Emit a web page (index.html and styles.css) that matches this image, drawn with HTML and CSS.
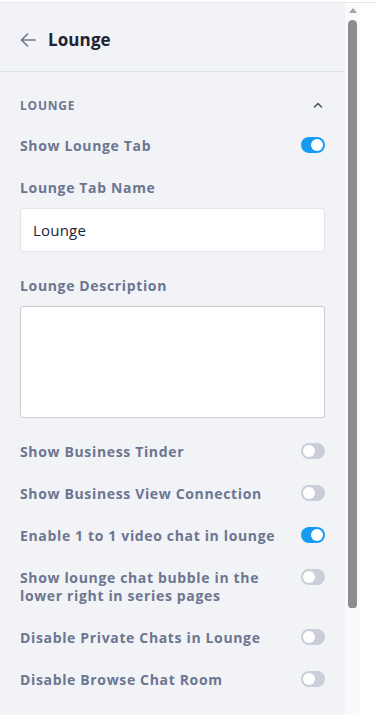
FILE: index.html
```html
<!DOCTYPE html>
<html>
<head>
    <meta charset="UTF-8">
    <link rel="stylesheet" href="styles.css">
</head>
<body>
    <div class="frame">
        <div class="panel">
            <div class="header">
                <button class="back-btn" title="Back">
                    <svg viewBox="0 0 16 14">
                        <path d="M15 7H1.5M7.5 1L1.5 7l6 6"/>
                    </svg>
                </button>
                <h3>Lounge</h3>
            </div>
            <div class="content">
                <div class="section-head">
                    <span>LOUNGE</span>
                    <svg class="chevron" viewBox="0 0 10 6">
                        <path d="M1.5 5L5 1.5 8.5 5"/>
                    </svg>
                </div>

                <div class="toggle-row first">
                    <span class="label">Show Lounge Tab</span>
                    <span class="toggle on"></span>
                </div>

                <div class="field">
                    <label class="label">Lounge Tab Name</label>
                    <div class="text-input">Lounge</div>
                </div>

                <div class="field">
                    <label class="label">Lounge Description</label>
                    <div class="text-area"></div>
                </div>

                <div class="toggle-list">
                    <div class="toggle-row">
                        <span class="label">Show Business Tinder</span>
                        <span class="toggle"></span>
                    </div>
                    <div class="toggle-row">
                        <span class="label">Show Business View Connection</span>
                        <span class="toggle"></span>
                    </div>
                    <div class="toggle-row">
                        <span class="label">Enable 1 to 1 video chat in lounge</span>
                        <span class="toggle on"></span>
                    </div>
                    <div class="toggle-row">
                        <span class="label">Show lounge chat bubble in the lower right in series pages</span>
                        <span class="toggle"></span>
                    </div>
                    <div class="toggle-row">
                        <span class="label">Disable Private Chats in Lounge</span>
                        <span class="toggle"></span>
                    </div>
                    <div class="toggle-row">
                        <span class="label">Disable Browse Chat Room</span>
                        <span class="toggle"></span>
                    </div>
                </div>
            </div>
        </div>
        <div class="scrollbar">
            <div class="scroll-arrow"></div>
            <div class="scroll-thumb"></div>
        </div>
    </div>
</body>
</html>
```

FILE: styles.css
```css
body {
    margin: 0;
    padding-top: 2px;
    background-color: #fff;
    font-family: "Open Sans", Arial, sans-serif;
    height: 713px;
    overflow: hidden;
}
.frame {
    display: flex;
    border-top: 1px solid #e6e8ec;
    height: 712px;
}
.panel {
    width: 345px;
    background-color: #f1f3f7;
}
.header {
    display: flex;
    align-items: center;
    gap: 12px;
    padding: 27px 20px 21px;
    border-bottom: 1px solid #dde0e6;
}
.header h3 {
    margin: 0;
    font-size: 17px;
    line-height: 20px;
    font-weight: 700;
    letter-spacing: 0.1px;
    color: #1e2235;
}
.back-btn {
    background: transparent;
    border: none;
    padding: 0;
    width: 16px;
    height: 14px;
    display: flex;
    cursor: pointer;
}
.back-btn svg {
    width: 16px;
    height: 14px;
    fill: none;
    stroke: #6f7789;
    stroke-width: 1.7;
    stroke-linecap: round;
    stroke-linejoin: round;
}
.content {
    padding: 1px 20px 0;
}
.section-head {
    display: flex;
    align-items: center;
    justify-content: space-between;
    margin-top: 24px;
    height: 16px;
    font-size: 12px;
    font-weight: 700;
    letter-spacing: 0.8px;
    color: #6f7890;
}
.chevron {
    width: 10px;
    height: 6px;
    margin-right: 2px;
    margin-top: -1px;
    fill: none;
    stroke: #4f566a;
    stroke-width: 1.6;
    stroke-linecap: round;
    stroke-linejoin: round;
}
.label {
    display: block;
    font-size: 14px;
    line-height: 18px;
    font-weight: 700;
    letter-spacing: 0.65px;
    color: #6c7690;
}
.toggle-row {
    display: flex;
    justify-content: space-between;
    align-items: flex-start;
    gap: 16px;
    margin-top: 24px;
}
.toggle-row .label {
    max-width: 262px;
}
.toggle {
    flex: none;
    position: relative;
    width: 24px;
    height: 16px;
    border-radius: 8px;
    background-color: #c9ced9;
}
.toggle::after {
    content: "";
    position: absolute;
    top: 2px;
    left: 2px;
    width: 12px;
    height: 12px;
    border-radius: 50%;
    background-color: #fff;
}
.toggle.on {
    background-color: #159cf2;
}
.toggle.on::after {
    left: 10px;
}
.field {
    margin-top: 24px;
}
.field + .field {
    margin-top: 25px;
}
.text-input {
    margin-top: 11px;
    height: 42px;
    padding: 0 12px;
    display: flex;
    align-items: center;
    background-color: #fff;
    border: 1px solid #e1e3e8;
    border-radius: 3px;
    font-size: 15px;
    letter-spacing: 0.2px;
    color: #1e2235;
}
.text-area {
    margin-top: 11px;
    height: 110px;
    background-color: #fff;
    border: 1px solid #cbcdd2;
    border-radius: 3px;
}
.toggle-list .toggle-row:first-child {
    margin-top: 25px;
}
.scrollbar {
    width: 15px;
    background-color: #fafafa;
    display: flex;
    flex-direction: column;
    align-items: center;
}
.scroll-arrow {
    margin-top: 5px;
    width: 0;
    height: 0;
    border-left: 4.5px solid transparent;
    border-right: 4.5px solid transparent;
    border-bottom: 5px solid #a3a3a3;
}
.scroll-thumb {
    margin-top: 7px;
    width: 9px;
    height: 588px;
    border-radius: 5px 5px 4px 4px;
    background-color: #8c8c8c;
}
```
